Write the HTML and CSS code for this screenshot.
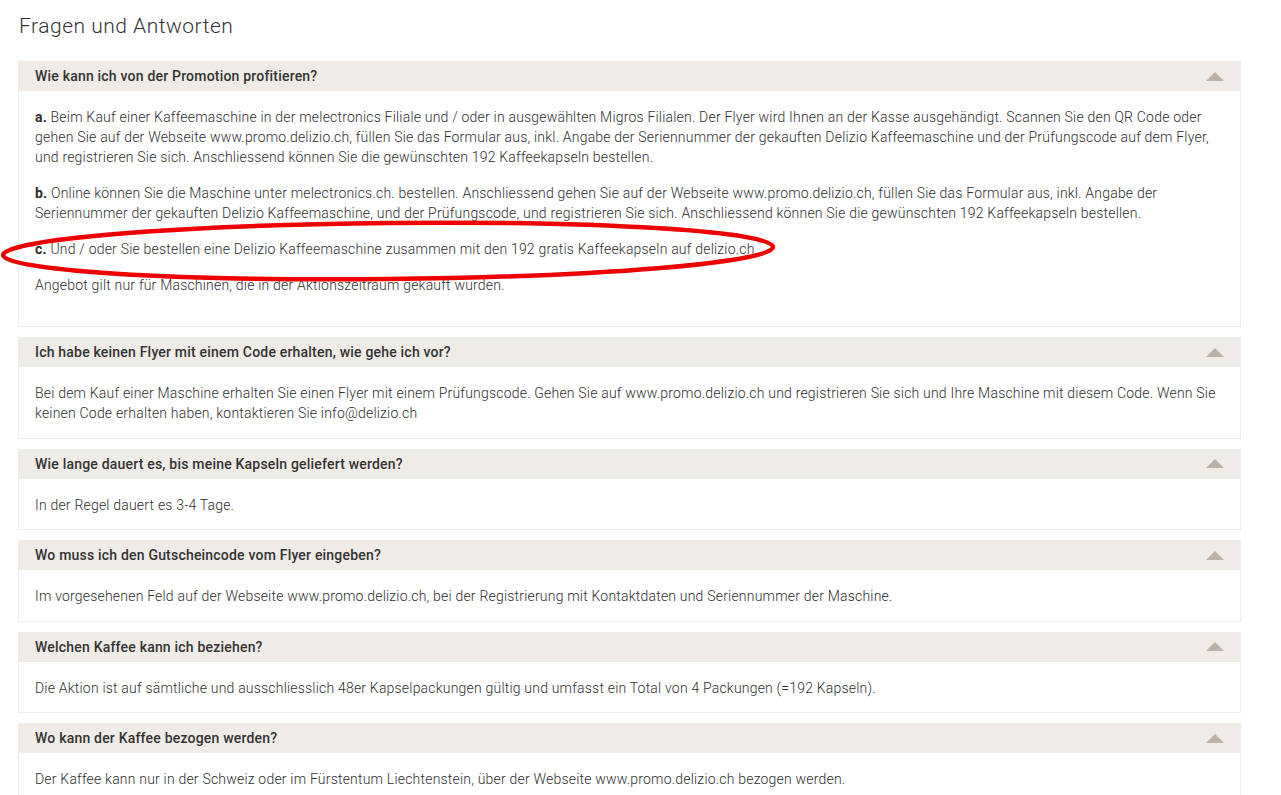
FILE: index.html
```html
<!DOCTYPE html>
<html lang="de">
<head>
<meta charset="utf-8">
<title>Fragen und Antworten</title>
<link rel="stylesheet" href="styles.css">
</head>
<body>
<div class="page">
  <h1 class="title">Fragen und Antworten</h1>
  <div class="faq">
    <section class="item">
      <div class="head"><span class="q">Wie kann ich von der Promotion profitieren?</span><span class="arrow"></span></div>
      <div class="body body-long">
        <p><b>a.</b> Beim Kauf einer Kaffeemaschine in der melectronics Filiale und / oder in ausgewählten Migros Filialen. Der Flyer wird Ihnen an der Kasse ausgehändigt. Scannen Sie den QR Code oder gehen Sie auf der Webseite www.promo.delizio.ch, füllen Sie das Formular aus, inkl. Angabe der Seriennummer der gekauften Delizio Kaffeemaschine und der Prüfungscode auf dem Flyer, und registrieren Sie sich. Anschliessend können Sie die gewünschten 192 Kaffeekapseln bestellen.</p>
        <p><b>b.</b> Online können Sie die Maschine unter melectronics.ch. bestellen. Anschliessend gehen Sie auf der Webseite www.promo.delizio.ch, füllen Sie das Formular aus, inkl. Angabe der Seriennummer der gekauften Delizio Kaffeemaschine, und der Prüfungscode, und registrieren Sie sich. Anschliessend können Sie die gewünschten 192 Kaffeekapseln bestellen.</p>
        <p><b>c.</b> Und / oder Sie bestellen eine Delizio Kaffeemaschine zusammen mit den 192 gratis Kaffeekapseln auf delizio.ch.</p>
        <p>Angebot gilt nur für Maschinen, die in der Aktionszeitraum gekauft wurden.</p>
      </div>
    </section>
    <section class="item">
      <div class="head"><span class="q">Ich habe keinen Flyer mit einem Code erhalten, wie gehe ich vor?</span><span class="arrow"></span></div>
      <div class="body">
        <p>Bei dem Kauf einer Maschine erhalten Sie einen Flyer mit einem Prüfungscode. Gehen Sie auf www.promo.delizio.ch und registrieren Sie sich und Ihre Maschine mit diesem Code. Wenn Sie keinen Code erhalten haben, kontaktieren Sie info@delizio.ch</p>
      </div>
    </section>
    <section class="item">
      <div class="head"><span class="q">Wie lange dauert es, bis meine Kapseln geliefert werden?</span><span class="arrow"></span></div>
      <div class="body">
        <p>In der Regel dauert es 3-4 Tage.</p>
      </div>
    </section>
    <section class="item">
      <div class="head"><span class="q">Wo muss ich den Gutscheincode vom Flyer eingeben?</span><span class="arrow"></span></div>
      <div class="body">
        <p>Im vorgesehenen Feld auf der Webseite www.promo.delizio.ch, bei der Registrierung mit Kontaktdaten und Seriennummer der Maschine.</p>
      </div>
    </section>
    <section class="item">
      <div class="head"><span class="q">Welchen Kaffee kann ich beziehen?</span><span class="arrow"></span></div>
      <div class="body">
        <p>Die Aktion ist auf sämtliche und ausschliesslich 48er Kapselpackungen gültig und umfasst ein Total von 4 Packungen (=192 Kapseln).</p>
      </div>
    </section>
    <section class="item">
      <div class="head"><span class="q">Wo kann der Kaffee bezogen werden?</span><span class="arrow"></span></div>
      <div class="body">
        <p>Der Kaffee kann nur in der Schweiz oder im Fürstentum Liechtenstein, über der Webseite www.promo.delizio.ch bezogen werden.</p>
      </div>
    </section>
  </div>
  <svg class="mark" width="790" height="74" viewBox="0 0 790 74" aria-hidden="true">
    <ellipse cx="388" cy="36" rx="385" ry="28" fill="none" stroke="#ee0000" stroke-width="4.5" transform="rotate(-0.6 388 36)"/>
  </svg>
</div>
</body>
</html>
```

FILE: styles.css
```css
html, body {
  margin: 0;
  padding: 0;
  background: #ffffff;
}
body {
  font-family: Roboto, "Liberation Sans", Arial, sans-serif;
  color: #333333;
  overflow: hidden;
}
.page {
  position: relative;
  padding: 0 40px 0 18px;
}
.title {
  margin: 0;
  padding: 14px 0 0 1px;
  height: 61px;
  box-sizing: border-box;
  font-size: 21px;
  line-height: 24px;
  font-weight: 300;
  letter-spacing: 0.5px;
  color: #333333;
}
.faq {
  display: flex;
  flex-direction: column;
  gap: 10px;
}
.item {
  display: flex;
  flex-direction: column;
}
.head {
  height: 30px;
  flex: none;
  background: #efebe6;
  display: flex;
  align-items: center;
  justify-content: space-between;
  padding: 0 17px;
  box-sizing: border-box;
}
.q {
  font-size: 14px;
  font-weight: 500;
  letter-spacing: 0.2px;
  color: #333333;
}
.arrow {
  width: 0;
  height: 0;
  border-left: 9px solid transparent;
  border-right: 9px solid transparent;
  border-bottom: 9px solid #bcb1a6;
}
.body {
  border: 1px solid #eeeeee;
  border-top: none;
  padding: 16px 17px 14.5px 16px;
}
.body-long {
  padding-bottom: 31px;
}
.body p {
  margin: 0 0 16px;
  font-size: 14px;
  line-height: 20px;
  font-weight: 300;
  letter-spacing: 0.2px;
  color: #2e2e2e;
}
.body p:last-child {
  margin-bottom: 0;
}
.body b {
  font-weight: 700;
}
.mark {
  position: absolute;
  left: 0;
  top: 215px;
  pointer-events: none;
}
```
